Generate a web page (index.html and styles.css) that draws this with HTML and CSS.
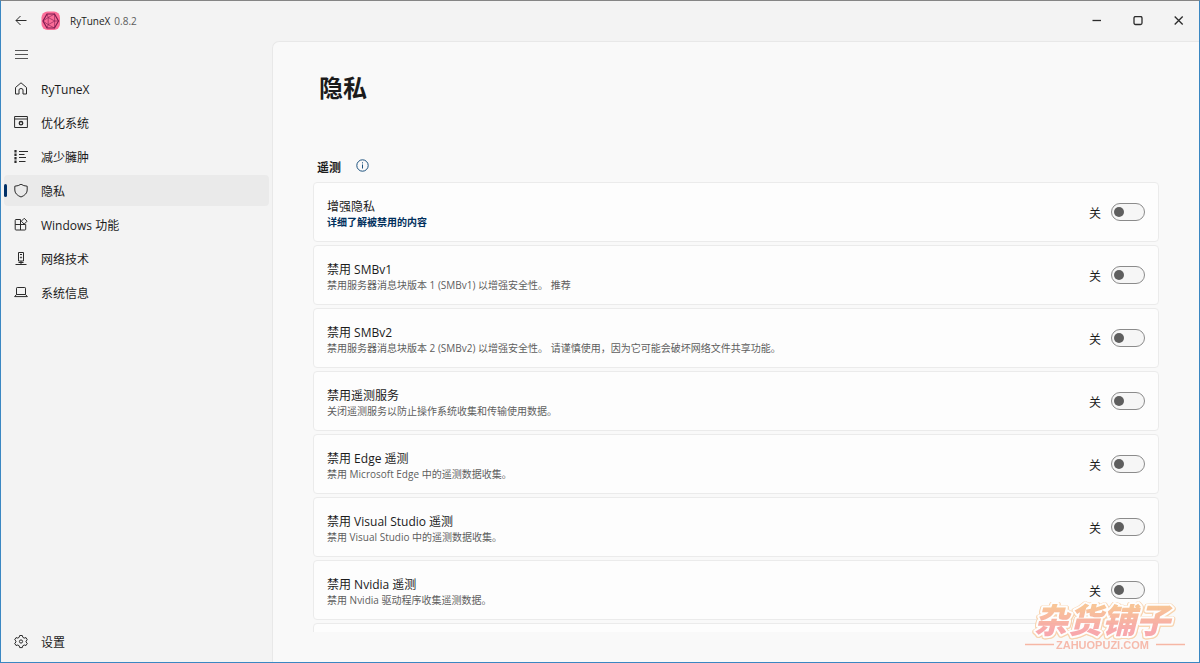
FILE: index.html
```html
<!DOCTYPE html>
<html lang="zh-CN">
<head>
<meta charset="utf-8">
<title>RyTuneX</title>
<link rel="stylesheet" href="styles.css">
</head>
<body>
<div class="window">
  <header class="titlebar">
    <button class="icon-button back" aria-label="返回"><svg width="12" height="12" viewBox="0 0 12 12"><path d="M11.500 5.500H1M5.500 1L1 5.500 5.500 10"/></svg></button>
    <svg class="logo" width="20" height="20" viewBox="0 0 20 20">
      <rect x=".5" y=".5" width="18.500" height="18.500" rx="6" fill="#fb6d98"/>
      <g fill="none" stroke="#7d1b50" stroke-width=".6"><path d="M6 3h7.500l4 7-4 7H6l-4-7z" stroke-width="1.200"/><path d="M7.200 6.500l6.500 3.500-6.500 3.700zM6 3l1.200 3.500L2 10l5.200 3.700L6 17M13.500 3L7.200 6.500M13.500 3l.2 7h3.800M13.700 10l-.2 7-6.300-3.300"/></g>
    </svg>
    <span class="app-name">RyTuneX</span>
    <span class="version">0.8.2</span>
    <div class="caption-buttons">
      <button aria-label="最小化"><svg width="10" height="10" viewBox="0 0 10 10"><path d="M.5 4.500h8.500" stroke-width="1.300"/></svg></button>
      <button aria-label="最大化"><svg width="10" height="10" viewBox="0 0 10 10"><rect x="1" y=".5" width="8" height="8" rx="1.500" stroke-width="1.300"/></svg></button>
      <button aria-label="关闭"><svg width="10" height="10" viewBox="0 0 10 10"><path d="M.7.500l8 8M8.700.500l-8 8" stroke-width="1.300"/></svg></button>
    </div>
  </header>
  <div class="body">
    <nav class="sidebar">
      <button class="icon-button menu" aria-label="菜单"><svg width="14" height="12" viewBox="0 0 14 12"><path d="M0 1.500h13M0 5.500h13M0 9.500h13"/></svg></button>
      <a class="nav-item" href="#home"><svg width="14" height="14" viewBox="0 0 14 14"><path d="M1.500 5.500L7 .8 12.500 5.500V12H9V8Q9 6.500 7 6.500T5 8v4H1.500z"/></svg>RyTuneX</a>
      <a class="nav-item" href="#optimize"><svg width="14" height="14" viewBox="0 0 14 14"><path d="M.6.500h12.800v11H.6zM.6 3h12.800"/><circle cx="7" cy="7.200" r="1.700" stroke-width="1.400"/></svg>优化系统</a>
      <a class="nav-item" href="#debloat"><svg width="14" height="14" viewBox="0 0 14 14"><path d="M5 1.500h9M5 4.500h5.500M5 7.500h7M5 11.500h6.500"/><path d="M1.500 0v13" stroke-width="2.200" stroke-dasharray="2.500 1"/></svg>减少臃肿</a>
      <a class="nav-item selected" href="#privacy" aria-current="page"><svg width="14" height="14" viewBox="0 0 14 14"><path d="M7 .2Q9.500 2 13.200 2.200V6Q13.200 10.500 7 13 .8 10.500 .8 6V2.200Q4.500 2 7 .2z"/></svg>隐私</a>
      <a class="nav-item" href="#features"><svg width="14" height="14" viewBox="0 0 14 14"><path d="M6.500 1.500H2q-.8 0-.8.8v8.900q0 .8.800.8h8.900q.8 0 .8-.8V6.500H1.200M6.500 1.500V12M10.200.3l2.900 2.900-2.900 2.900-2.900-2.900z"/></svg>Windows 功能</a>
      <a class="nav-item" href="#network"><svg width="14" height="14" viewBox="0 0 14 14"><path d="M4.500.5h5v8.500h-5zM6 2.500h2M7 9v3M1.500 12.500h11M4.500 10.500h5"/><circle cx="7" cy="5.500" r=".6"/></svg>网络技术</a>
      <a class="nav-item" href="#system"><svg width="14" height="14" viewBox="0 0 14 14"><path d="M2.500 8.500V2.200q0-.7.700-.7h7.600q.7 0 .7.700v6.300zM2.500 8.500L.6 10.600h12.800L11.500 8.500"/></svg>系统信息</a>
      <a class="nav-item settings" href="#settings"><svg width="14" height="14" viewBox="0 0 14 14"><path d="M5.700.500h2.600l.5 1.800 1.400.8 1.800-.5 1.300 2.200L12 6.100v.9l1.300 1.300L12 10.500l-1.800-.5-1.400.8-.5 1.800H5.700l-.5-1.800-1.400-.8-1.800.5L.7 8.300 2 7v-.9L.7 4.800 2 2.600l1.800.5 1.400-.8z" stroke-linejoin="round"/><circle cx="7" cy="6.500" r="1.600"/></svg>设置</a>
    </nav>
    <main class="content">
      <h1>隐私</h1>
      <div class="section-head">
        <h2>遥测</h2>
        <button class="info" aria-label="信息"><svg width="13" height="13" viewBox="0 0 13 13"><circle cx="6.500" cy="6.500" r="5.700"/><path d="M6.500 5.500v4M6.500 3.300v1.100"/></svg></button>
      </div>
      <div class="cards">
        <div class="card"><div class="card-text"><label class="card-title" for="t1">增强隐私</label><a class="learn-more" href="#details">详细了解被禁用的内容</a></div><span class="state">关</span><input class="toggle" type="checkbox" role="switch" id="t1"></div>
        <div class="card"><div class="card-text"><label class="card-title" for="t2">禁用 SMBv1</label><p>禁用服务器消息块版本 1 (SMBv1) 以增强安全性。 推荐</p></div><span class="state">关</span><input class="toggle" type="checkbox" role="switch" id="t2"></div>
        <div class="card"><div class="card-text"><label class="card-title" for="t3">禁用 SMBv2</label><p>禁用服务器消息块版本 2 (SMBv2) 以增强安全性。 请谨慎使用，因为它可能会破坏网络文件共享功能。</p></div><span class="state">关</span><input class="toggle" type="checkbox" role="switch" id="t3"></div>
        <div class="card"><div class="card-text"><label class="card-title" for="t4">禁用遥测服务</label><p>关闭遥测服务以防止操作系统收集和传输使用数据。</p></div><span class="state">关</span><input class="toggle" type="checkbox" role="switch" id="t4"></div>
        <div class="card"><div class="card-text"><label class="card-title" for="t5">禁用 Edge 遥测</label><p>禁用 Microsoft Edge 中的遥测数据收集。</p></div><span class="state">关</span><input class="toggle" type="checkbox" role="switch" id="t5"></div>
        <div class="card"><div class="card-text"><label class="card-title" for="t6">禁用 Visual Studio 遥测</label><p>禁用 Visual Studio 中的遥测数据收集。</p></div><span class="state">关</span><input class="toggle" type="checkbox" role="switch" id="t6"></div>
        <div class="card"><div class="card-text"><label class="card-title" for="t7">禁用 Nvidia 遥测</label><p>禁用 Nvidia 驱动程序收集遥测数据。</p></div><span class="state">关</span><input class="toggle" type="checkbox" role="switch" id="t7"></div>
        <div class="card"></div>
      </div>
    </main>
  </div>
  <svg class="watermark" width="162" height="52" viewBox="0 0 162 52">
    <defs><linearGradient id="wm" x1="0" y1="0" x2="0" y2="1"><stop offset=".25" stop-color="#f8c08c"/><stop offset=".75" stop-color="#f8a0a4"/></linearGradient></defs>
    <text class="wm-title" x="10" y="31">杂货铺子</text>
    <path d="M1 42.500h29M132 42.500h29" stroke="#f6b09c" stroke-width="1.500"/>
    <text class="wm-url" x="32" y="47">ZAHUOPUZI.COM</text>
  </svg>
</div>
</body>
</html>
```
FILE: styles.css
```css
* { box-sizing: border-box; }
body {
  margin: 0;
  color: #1b1b1b;
  font: 12px/16px "Open Sans", "Noto Sans CJK SC", sans-serif;
}
button { border: 0; padding: 0; background: none; }
svg { flex: none; fill: none; stroke: #2b2b2b; stroke-width: 1; }
h1, h2, p { margin: 0; }
.window {
  position: relative;
  display: flex;
  flex-direction: column;
  height: 100vh;
  background: #f3f3f3;
  border: 1px solid #3a87c2;
  border-top-color: #858585;
}
.titlebar { display: flex; align-items: center; flex: none; height: 40px; padding-left: 14px; }
.icon-button { display: flex; align-items: center; }
.logo { margin: 0 9px 0 14px; stroke: none; }
.app-name { font-size: 10px; }
.version { margin-left: 4px; color: #5c5c5c; font-size: 10px; }
.caption-buttons { display: flex; margin-left: auto; }
.caption-buttons button { display: grid; place-items: center; width: 41px; height: 32px; }
.body { display: flex; flex: 1; min-height: 0; }
.sidebar { display: flex; flex-direction: column; flex: none; gap: 3px; width: 271px; padding: 3px 3px 5px; }
.menu { height: 22px; margin: 0 0 4px 11px; align-self: flex-start; }
.menu svg { stroke: #555; }
.nav-item {
  position: relative;
  display: flex;
  align-items: center;
  gap: 13px;
  height: 31px;
  padding: 3px 0 0 10px;
  border-radius: 4px;
  color: #1b1b1b;
  text-decoration: none;
}
.nav-item svg { margin-bottom: 2px; }
.selected { background: #eaeaea; }
.selected::before {
  content: "";
  position: absolute;
  left: 0;
  top: 9px;
  width: 3px;
  height: 13px;
  border-radius: 2px;
  background: #002f66;
}
.settings { margin-top: auto; }
.content {
  display: flex;
  flex-direction: column;
  flex: 1;
  min-width: 0;
  padding: 29px 40px 30px;
  background: #f9f9f9;
  border: solid #e8e8e8;
  border-width: 1px 0 0 1px;
  border-radius: 7px 0 0 0;
}
h1 { margin-left: 6px; font-size: 24px; line-height: 34px; }
.section-head { display: flex; align-items: flex-start; gap: 15px; margin: 53px 0 4px 4px; }
h2 { font-size: 12px; line-height: 20px; }
.info { display: flex; padding-top: 1px; }
.info svg { stroke: #1c527e; }
.cards { display: flex; flex-direction: column; gap: 3px; flex: 1; min-height: 0; overflow: hidden; }
.card {
  display: flex;
  align-items: center;
  flex: none;
  min-height: 60px;
  padding: 0 13px;
  background: #fdfdfd;
  border: 1px solid #ebebeb;
  border-radius: 4px;
}
.card-text { display: flex; flex-direction: column; align-items: flex-start; flex: 1; padding-top: 3px; }
.card p { color: #5e5e5e; font-size: 10px; line-height: 14px; }
.learn-more { color: #002f5c; font-size: 10px; line-height: 14px; font-weight: 700; text-decoration: none; }
.state { margin-right: 10px; padding-top: 3px; }
.toggle {
  appearance: none;
  display: flex;
  align-items: center;
  width: 34px;
  height: 18px;
  margin: 0;
  padding-left: 2px;
  border: 1px solid #8b8b8b;
  border-radius: 9px;
  background: #f6f6f6;
}
.toggle::before { content: ""; width: 10px; height: 10px; border-radius: 50%; background: #5e5e5e; }
.toggle:checked { justify-content: flex-end; padding: 0 2px 0 0; background: #003e73; }
.toggle:checked::before { background: #fff; }
.watermark { position: absolute; right: 13px; bottom: 8px; overflow: visible; opacity: .9; pointer-events: none; }
.wm-title {
  fill: url(#wm);
  stroke: #fff;
  stroke-width: 4;
  stroke-linejoin: round;
  paint-order: stroke;
  font: italic 900 34px "Noto Sans CJK SC", sans-serif;
  filter: drop-shadow(1px 0 #f8d0a8) drop-shadow(-1px 0 #f8d0a8) drop-shadow(0 1px #f8d0a8);
}
.wm-url { fill: #f6b4a4; stroke: none; font: bold 11px "Liberation Sans", Arial, sans-serif; }
```
